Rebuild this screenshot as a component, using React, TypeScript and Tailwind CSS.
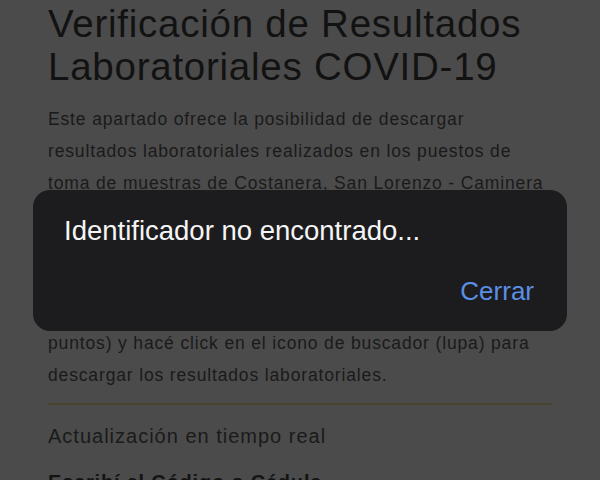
const bodyLines = [
  'Este apartado ofrece la posibilidad de descargar',
  'resultados laboratoriales realizados en los puestos de',
  'toma de muestras de Costanera, San Lorenzo - Caminera',
  'y Ñu Guazú. Ingresá el código que figura en el',
  'comprobante entregado al momento de la toma de',
  'muestra o tu número de Cédula de Identidad en',
  'el campo de búsqueda (sin guiones ni',
  'puntos) y hacé click en el icono de buscador (lupa) para',
  'descargar los resultados laboratoriales.',
]

function AlertDialog({ message, onClose }: { message: string; onClose?: () => void }) {
  return (
    <div className="absolute top-[190px] left-[33px] flex h-[141px] w-[534px] flex-col rounded-[17px] bg-[#1c1c1e] pt-[21px] pr-[33px] pl-[31px]">
      <p className="text-[27.5px] leading-[40px] text-[#f5f5f5]">{message}</p>
      <div className="mt-[20px] flex justify-end">
        <button
          className="text-[26px] leading-[40px] text-[#5b8fe4]"
          onClick={onClose}
        >
          Cerrar
        </button>
      </div>
    </div>
  )
}

export default function App() {
  // page is shown already dimmed behind the alert
  return (
    <div
      className="relative h-[480px] w-[600px] overflow-hidden bg-[#4b4b4b] px-[48px]"
      style={{ fontFamily: '"Liberation Sans", Arial, sans-serif' }}
    >
      <h1 className="pt-[2px] text-[38.5px] leading-[43px] tracking-[0.75px] text-[#121212]">
        Verificación de Resultados
        <br />
        Laboratoriales COVID-19
      </h1>
      <p className="mt-[15px] text-[17.5px] leading-[32px] tracking-[0.85px] text-[#1a1a1a]">
        {bodyLines.map((line) => (
          <span key={line} className="block whitespace-nowrap">
            {line}
          </span>
        ))}
      </p>
      <div className="mt-[12px] h-[2px] bg-[#48432c]" />
      <h2 className="mt-[17px] text-[20px] leading-[28px] tracking-[1px] text-[#1a1a1a]">
        Actualización en tiempo real
      </h2>
      <h3 className="mt-[18px] text-[20px] leading-[28px] font-bold tracking-[0.8px] text-[#141414]">
        Escribí el Código o Cédula
      </h3>
      <AlertDialog message="Identificador no encontrado..." />
    </div>
  )
}
